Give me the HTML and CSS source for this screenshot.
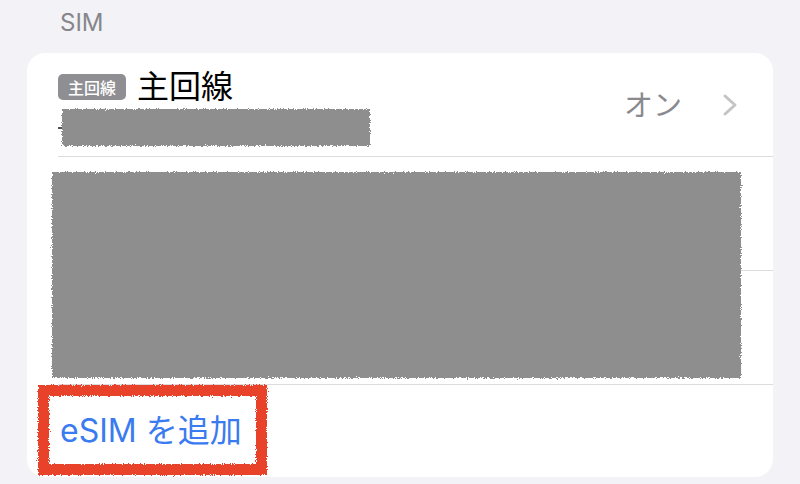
FILE: index.html
```html
<!DOCTYPE html>
<html lang="ja">
<head>
<meta charset="utf-8">
<link rel="stylesheet" href="styles.css">
</head>
<body>
<svg class="defs" width="0" height="0" aria-hidden="true">
  <filter id="rough" x="-2%" y="-5%" width="104%" height="110%">
    <feTurbulence type="fractalNoise" baseFrequency="0.9" numOctaves="2" seed="3" result="n"/>
    <feDisplacementMap in="SourceGraphic" in2="n" scale="5" xChannelSelector="R" yChannelSelector="G"/>
  </filter>
</svg>
<div class="screen">
  <div class="section-header">SIM</div>
  <div class="card">
    <div class="row row-main">
      <div class="main-left">
        <div class="title-line">
          <span class="badge">主回線</span>
          <span class="title">主回線</span>
        </div>
        <div class="number-line">
          <span class="dash"></span>
          <span class="redact redact-number"></span>
        </div>
      </div>
      <div class="main-right">
        <span class="value">オン</span>
        <svg class="chevron" width="16" height="24" viewBox="0 0 16 24"><path d="M3 3 L13 12 L3 21" fill="none" stroke="#c4c4c7" stroke-width="3" stroke-linecap="round" stroke-linejoin="round"/></svg>
      </div>
    </div>
    <div class="row row-blank"></div>
    <div class="row row-blank"></div>
    <div class="row row-add">
      <span class="add-text">eSIM を追加</span>
    </div>
    <div class="redact redact-block"></div>
    <div class="annot"></div>
  </div>
</div>
</body>
</html>
```

FILE: styles.css
```css
* { box-sizing: border-box; }
html, body {
  margin: 0;
  padding: 0;
  background: #f2f2f7;
}
body {
  width: 800px;
  height: 484px;
  overflow: hidden;
  font-family: Inter, "Noto Sans CJK JP", sans-serif;
}
.defs { position: absolute; }
.screen {
  padding-top: 8px;
}
.section-header {
  padding-left: 60px;
  font-size: 24px;
  line-height: 30px;
  color: #86868b;
  height: 45px;
}
.card {
  position: relative;
  margin-left: 27px;
  width: 746px;
  height: 424px;
  background: #ffffff;
  border-radius: 18px;
  overflow: hidden;
}
.row {
  position: relative;
  display: flex;
  align-items: center;
  padding-left: 31px;
}
.row::after {
  content: "";
  position: absolute;
  left: 31px;
  right: 0;
  bottom: 0;
  height: 1px;
  background: #dcdce0;
}
.row-add::after { display: none; }
.row-main {
  height: 104px;
  justify-content: space-between;
  padding-right: 35px;
}
.row-blank { height: 114px; }
.row-add { height: 92px; }
.main-left {
  display: flex;
  flex-direction: column;
  align-self: flex-start;
  padding-top: 16px;
}
.title-line {
  display: flex;
  align-items: center;
  height: 36px;
}
.badge {
  display: inline-flex;
  align-items: center;
  justify-content: center;
  width: 68px;
  height: 26px;
  border-radius: 5px;
  background: #8e8e93;
  color: #ffffff;
  font-size: 16px;
  font-weight: 500;
  margin-right: 11px;
}
.title {
  font-size: 32px;
  color: #000000;
  line-height: 36px;
}
.number-line {
  display: flex;
  align-items: center;
  margin-top: 4px;
  height: 37px;
}
.dash {
  width: 4px;
  height: 2px;
  background: #555;
}
.redact {
  background: #8e8e8e;
  filter: url(#rough);
}
.redact-number {
  width: 308px;
  height: 37px;
}
.main-right {
  display: flex;
  align-items: center;
}
.value {
  font-size: 29px;
  color: #8a8a8e;
  margin-right: 40px;
  line-height: 32px;
  padding-top: 2px;
}
.chevron { display: block; }
.add-text {
  font-size: 32px;
  color: #3a7bf0;
  line-height: 36px;
  padding-left: 2px;
}
.redact-block {
  position: absolute;
  left: 25px;
  top: 119px;
  width: 689px;
  height: 206px;
}
.annot {
  position: absolute;
  left: 11px;
  top: 332px;
  width: 229px;
  height: 90px;
  border: 11px solid #e8432a;
  filter: url(#rough);
}
```
